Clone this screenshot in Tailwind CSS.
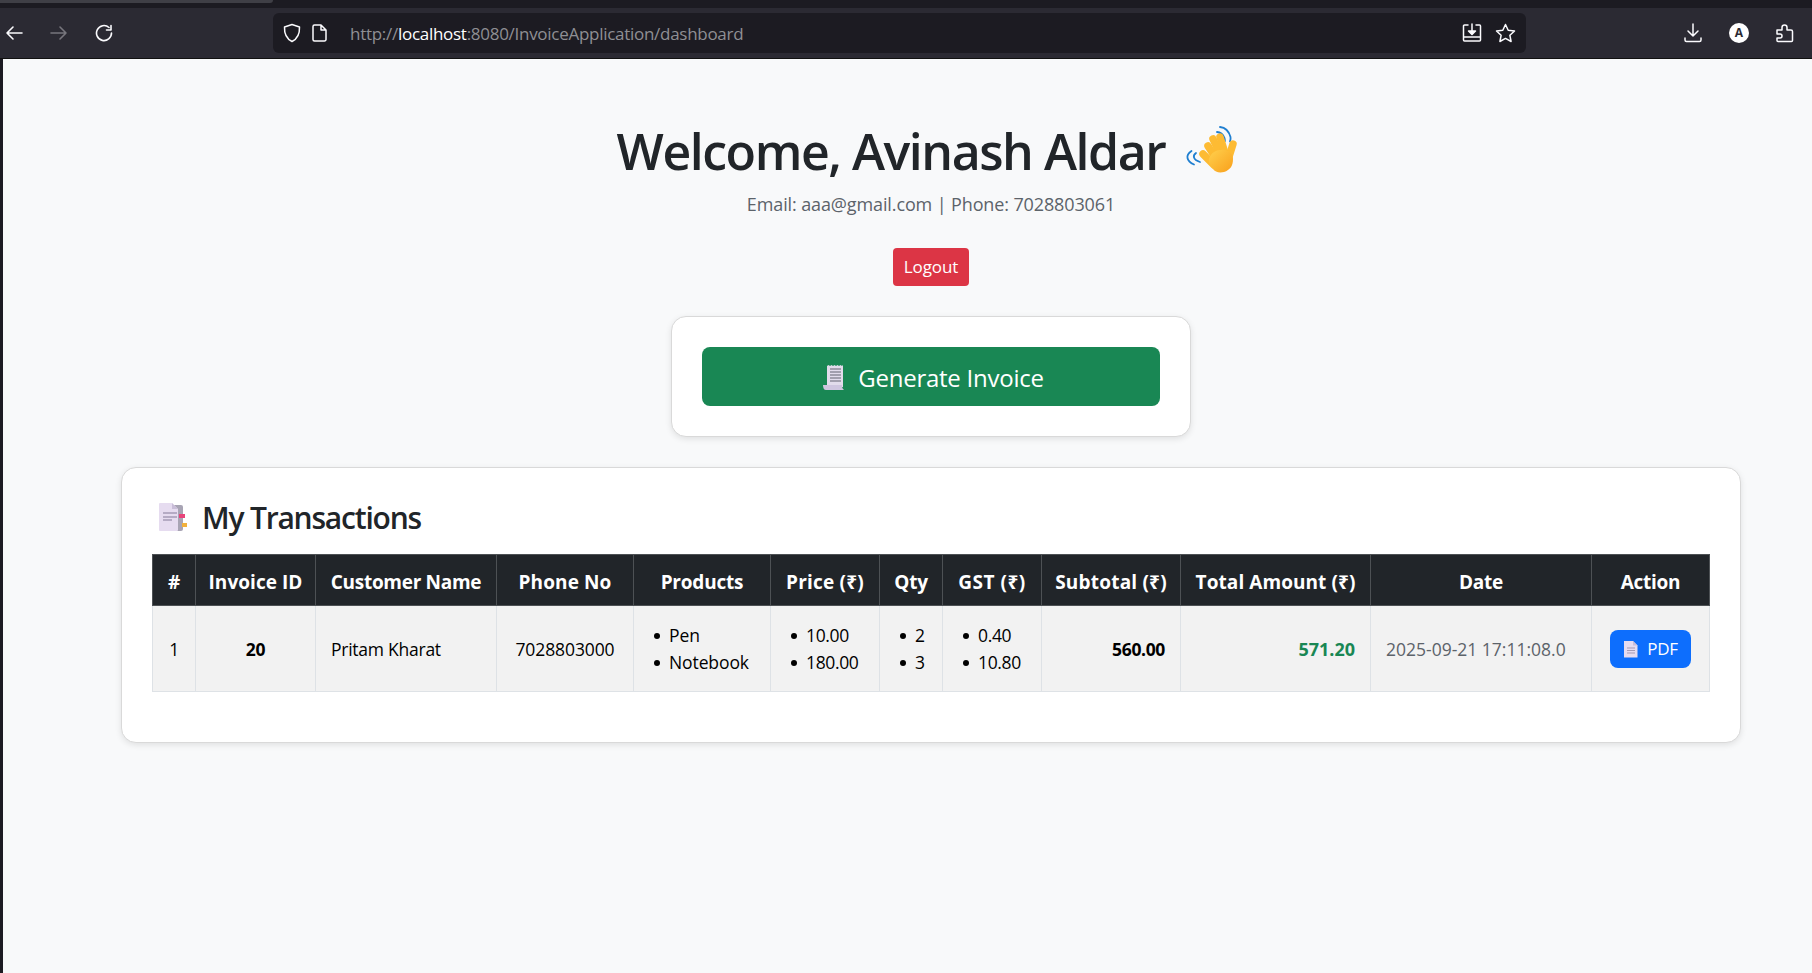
<!DOCTYPE html>
<html lang="en">

<head>
    <meta charset="UTF-8">
    <meta name="viewport" content="width=device-width, initial-scale=1.0">
    <title>Dashboard</title>
    <script src="https://cdn.jsdelivr.net/npm/@tailwindcss/browser@4"></script>
</head>

<body class="h-[973px] overflow-hidden bg-[#1c1b22] font-['Open_Sans','Noto_Sans',sans-serif]">
    <!-- browser chrome -->
    <div class="h-[8px] bg-[#1c1b22]">
        <div class="h-[3px] w-[273px] rounded-br bg-[#3f3f46]"></div>
    </div>
    <div class="flex h-[51px] items-start border-b border-[#111] bg-[#2b2a33] text-white">
        <div class="flex h-[50px] w-[273px] items-center">
            <svg class="ml-[5px]" width="18" height="18" viewBox="0 0 18 18" fill="none" stroke="#fbfbfe" stroke-width="1.6" stroke-linecap="round" stroke-linejoin="round"><path d="M17 9H2M8 3 2 9l6 6"/></svg>
            <svg class="ml-[27px]" width="18" height="18" viewBox="0 0 18 18" fill="none" stroke="#77767d" stroke-width="1.6" stroke-linecap="round" stroke-linejoin="round"><path d="M1 9h15M10 3l6 6-6 6"/></svg>
            <svg class="ml-[27px]" width="18" height="18" viewBox="0 0 18 18" fill="none" stroke="#fbfbfe" stroke-width="1.6" stroke-linecap="round" stroke-linejoin="round"><path d="M14 3.500A7.500 7.500 0 1 0 16.500 9M16 1.500V6h-4.500"/></svg>
        </div>
        <div class="mt-[5px] flex h-[40px] w-[1253px] items-center rounded-md bg-[#1c1b22]">
            <svg class="ml-[10px]" width="18" height="20" viewBox="0 0 18 20" fill="none" stroke="#fbfbfe" stroke-width="1.5" stroke-linejoin="round"><path d="M9 1.500 16.500 4c.3 6.500-1.500 11.500-7.500 14.500C3 15.500 1.200 10.500 1.500 4Z"/></svg>
            <svg class="ml-[11px]" width="15" height="18" viewBox="0 0 15 18" fill="none" stroke="#fbfbfe" stroke-width="1.5" stroke-linejoin="round"><path d="M2.500 1H9l5 5v9.500a1.500 1.500 0 0 1-1.500 1.500h-10A1.500 1.500 0 0 1 1 15.500v-13A1.500 1.500 0 0 1 2.500 1ZM9 1v5h5"/></svg>
            <div class="ml-[23px] mt-[2px] text-[17px] tracking-[-0.28px] text-[#8f8f94]">http://<span class="text-white">localhost</span>:8080/InvoiceApplication/dashboard</div>
            <svg class="ml-auto" width="20" height="20" viewBox="0 0 20 20" fill="none" stroke="#fbfbfe" stroke-width="1.500" stroke-linecap="round" stroke-linejoin="round"><path d="M6 2H2.500A1 1 0 0 0 1.500 3v14a1 1 0 0 0 1 1h15a1 1 0 0 0 1-1V3a1 1 0 0 0-1-1H14M1.500 14h17"/><path d="M10 1v8" /><path d="m6.500 8 3.500 3.500L13.500 8Z" fill="#fbfbfe"/></svg>
            <svg class="ml-[13px] mr-[10px]" width="21" height="20" viewBox="0 0 21 20" fill="none" stroke="#fbfbfe" stroke-width="1.500" stroke-linejoin="round"><path d="m10.500 1.500 2.700 5.700 6.300.8-4.600 4.300 1.200 6.200-5.600-3.100-5.600 3.100 1.200-6.200L1.500 8l6.300-.8Z"/></svg>
        </div>
        <div class="flex h-[50px] flex-1 items-center">
            <svg class="ml-[158px]" width="18" height="20" viewBox="0 0 18 20" fill="none" stroke="#fbfbfe" stroke-width="1.500" stroke-linecap="round" stroke-linejoin="round"><path d="M9 1v12M4 8l5 5 5-5M1 15v2a1.500 1.500 0 0 0 1.500 1.500h13A1.500 1.500 0 0 0 17 17v-2"/></svg>
            <div class="ml-[27px] flex h-[20px] w-[20px] items-center justify-center rounded-full bg-white text-[12px] font-bold text-[#2b2a33]">A</div>
            <svg class="ml-[27px]" width="18" height="20" viewBox="0 0 18 20" fill="none" stroke="#fbfbfe" stroke-width="1.500" stroke-linejoin="round"><path d="M1 7h5V4.500a2.500 2.500 0 0 1 5 0V7h4a1.500 1.500 0 0 1 1.500 1.500v9a1 1 0 0 1-1 1H2a1 1 0 0 1-1-1V15h3a2 2 0 0 0 0-4H1Z"/></svg>
        </div>
    </div>

    <!-- page -->
    <div class="ml-[3px] h-[914px] bg-[#f8f9fa] pt-[62px] text-[#212529]">
        <div class="ml-[118px] flex w-[1620px] flex-col items-center">
            <h1 class="flex h-[60px] items-center text-[50px] font-[550] tracking-[-1.45px]">
                Welcome, Avinash Aldar
                <svg class="ml-[20px]" width="60" height="55" viewBox="8 5 60 55">
                    <defs>
                        <linearGradient id="hand" x1="0" y1="0" x2="1" y2="1">
                            <stop offset="0" stop-color="#ffd04d" />
                            <stop offset="1" stop-color="#f9a01b" />
                        </linearGradient>
                    </defs>
                    <g fill="none" stroke="#1f7fd0" stroke-width="1.800" stroke-linecap="round">
                        <path d="M43 8c5 .5 9 4.500 10.500 10 .3 1.500 0 3-.5 4.500" />
                        <path d="M40 13c3 .2 6 2.500 7.500 6 .3 1 .5 2 .3 3.500" />
                        <path d="M14.500 32c-3 2-4.500 4.500-4 7 .5 2.500 3 5 6.500 6.500" />
                        <path d="M19 34c-2 1.500-2.500 3-2 4.500 .5 1.500 3 3.500 6 4.500" />
                    </g>
                    <g fill="none" stroke="#fdbb33" stroke-width="7.500" stroke-linecap="round">
                        <path d="M26 35 37 46" />
                        <path d="M31 27 40 41" />
                        <path d="M36 20 44 37" />
                        <path d="M43 18 48 34" />
                        <path d="M56 25 51 41" />
                    </g>
                    <path d="M32 40c2-7 9-10 16-9 5 1 8 4 8 9 0 7-3 11-9 13-5 1-9 0-11-3-2-3-5-7-4-10Z" fill="url(#hand)" />
                </svg>
            </h1>
            <p class="mt-[10px] text-[18px] leading-[26px] tracking-[-0.12px] text-[#5c636a]">Email: aaa@gmail.com | Phone: 7028803061</p>
            <button class="mt-[31px] h-[38px] w-[76px] rounded bg-[#dc3545] text-[17px] tracking-[-0.1px] text-white">Logout</button>
            <div class="mt-[30px] h-[121px] w-[520px] rounded-[15px] border border-[#d9d9d9] bg-white p-[30px] shadow-[0_2px_6px_rgba(0,0,0,0.1)]">
                <button class="flex h-[59px] w-full items-center justify-center rounded-lg bg-[#198754] pt-[2px] text-[24px] tracking-[-0.25px] text-white">
                    <svg class="ml-[5px] mr-[13px]" width="22" height="25" viewBox="0 0 22 25">
                        <path d="M4 1l1.500-1 1.500 1 1.500-1 1.500 1 1.500-1 1.500 1 1.500-1 1.500 1 1.500-1 1.500 1 1-1V22H4Z" fill="#e2dcec" />
                        <path d="M0 20h19c0 2 .5 4 2 5H3c-2 0-3-2-3-5Z" fill="#cfc6e0" />
                        <path d="M7 4h11M7 7h11M7 10h11M7 13h11M7 16h11" stroke="#8d8a99" stroke-width="1.300" />
                    </svg>
                    Generate Invoice
                </button>
            </div>
        </div>

        <div class="ml-[118px] mt-[30px] h-[276px] w-[1620px] rounded-[15px] border border-[#d9d9d9] bg-white pl-[30px] pt-[31px] shadow-[0_2px_6px_rgba(0,0,0,0.1)]">
            <h3 class="flex h-[36px] items-center text-[30px] font-[550] tracking-[-1.2px]">
                <svg class="ml-[7px] mr-[15px]" width="28" height="28" viewBox="9 8 28 28">
                    <path d="M24 10h7a2 2 0 0 1 2 2v22a2 2 0 0 1-2 2h-7Z" fill="#a8a4b4" />
                    <path d="M10 8h12l6 6v21a1 1 0 0 1-1 1H10a1 1 0 0 1-1-1V9a1 1 0 0 1 1-1Z" fill="#e6dcf0" />
                    <path d="M22 8v6h6Z" fill="#c9bdd8" />
                    <path d="M13 18h14M13 22h14M13 25h9" stroke="#a59bb5" stroke-width="1.500" />
                    <rect x="29" y="19" width="6" height="4" fill="#e8447a" />
                    <rect x="32" y="28" width="5" height="4" fill="#f2b13c" />
                </svg>
                My Transactions
            </h3>
            <table class="mt-[19px] w-[1557px] table-fixed border-collapse text-[17.5px] tracking-[-0.35px] text-black">
                <colgroup>
                    <col class="w-[43px]">
                    <col class="w-[120px]">
                    <col class="w-[181px]">
                    <col class="w-[137px]">
                    <col class="w-[137px]">
                    <col class="w-[109px]">
                    <col class="w-[63px]">
                    <col class="w-[99px]">
                    <col class="w-[139px]">
                    <col class="w-[190px]">
                    <col class="w-[221px]">
                    <col class="w-[118px]">
                </colgroup>
                <thead>
                    <tr class="h-[51px] bg-[#212529] text-[19px] tracking-[-0.3px] text-white">
                        <th class="border border-[#4d5154] pt-[4px] font-bold">#</th>
                        <th class="border border-[#4d5154] pt-[4px] font-bold tracking-[0.05px]">Invoice ID</th>
                        <th class="border border-[#4d5154] pt-[4px] font-bold">Customer Name</th>
                        <th class="border border-[#4d5154] pt-[4px] font-bold tracking-[0.1px]">Phone No</th>
                        <th class="border border-[#4d5154] pt-[4px] font-bold tracking-[-0.2px]">Products</th>
                        <th class="border border-[#4d5154] pt-[4px] font-bold tracking-[0.2px]">Price (₹)</th>
                        <th class="border border-[#4d5154] pt-[4px] font-bold">Qty</th>
                        <th class="border border-[#4d5154] pt-[4px] font-bold tracking-[0.5px]">GST (₹)</th>
                        <th class="border border-[#4d5154] pt-[4px] font-bold tracking-[0.2px]">Subtotal (₹)</th>
                        <th class="border border-[#4d5154] pt-[4px] font-bold tracking-[0.07px]">Total Amount (₹)</th>
                        <th class="border border-[#4d5154] pt-[4px] font-bold">Date</th>
                        <th class="border border-[#4d5154] pt-[4px] font-bold">Action</th>
                    </tr>
                </thead>
                <tbody>
                    <tr class="h-[86px] bg-[#f2f2f2]">
                        <td class="border border-[#dee2e6] pt-[2px] text-center">1</td>
                        <td class="border border-[#dee2e6] pt-[2px] text-center font-bold">20</td>
                        <td class="border border-[#dee2e6] pl-[15px] pt-[2px] tracking-[-0.25px]">Pritam Kharat</td>
                        <td class="border border-[#dee2e6] pt-[2px] text-center tracking-[-0.1px]">7028803000</td>
                        <td class="border border-[#dee2e6]">
                            <ul class="pl-[35px] leading-[27px] tracking-[-0.1px]">
                                <li class="relative before:absolute before:left-[-15px] before:top-[11px] before:h-[6px] before:w-[6px] before:rounded-full before:bg-black">Pen</li>
                                <li class="relative before:absolute before:left-[-15px] before:top-[11px] before:h-[6px] before:w-[6px] before:rounded-full before:bg-black">Notebook</li>
                            </ul>
                        </td>
                        <td class="border border-[#dee2e6]">
                            <ul class="pl-[35px] leading-[27px]">
                                <li class="relative before:absolute before:left-[-15px] before:top-[11px] before:h-[6px] before:w-[6px] before:rounded-full before:bg-black">10.00</li>
                                <li class="relative before:absolute before:left-[-15px] before:top-[11px] before:h-[6px] before:w-[6px] before:rounded-full before:bg-black">180.00</li>
                            </ul>
                        </td>
                        <td class="border border-[#dee2e6]">
                            <ul class="pl-[35px] leading-[27px]">
                                <li class="relative before:absolute before:left-[-15px] before:top-[11px] before:h-[6px] before:w-[6px] before:rounded-full before:bg-black">2</li>
                                <li class="relative before:absolute before:left-[-15px] before:top-[11px] before:h-[6px] before:w-[6px] before:rounded-full before:bg-black">3</li>
                            </ul>
                        </td>
                        <td class="border border-[#dee2e6]">
                            <ul class="pl-[35px] leading-[27px]">
                                <li class="relative before:absolute before:left-[-15px] before:top-[11px] before:h-[6px] before:w-[6px] before:rounded-full before:bg-black">0.40</li>
                                <li class="relative before:absolute before:left-[-15px] before:top-[11px] before:h-[6px] before:w-[6px] before:rounded-full before:bg-black">10.80</li>
                            </ul>
                        </td>
                        <td class="border border-[#dee2e6] pr-[15px] pt-[2px] text-right font-bold">560.00</td>
                        <td class="border border-[#dee2e6] pr-[15px] pt-[2px] text-right text-[18px] font-bold tracking-[0px] text-[#198754]">571.20</td>
                        <td class="border border-[#dee2e6] pl-[15px] pt-[2px] tracking-[0px] text-[#5c636a]">2025-09-21 17:11:08.0</td>
                        <td class="border border-[#dee2e6] text-center">
                            <button class="inline-flex h-[38px] w-[81px] items-center justify-center rounded-lg bg-[#0d6efd] text-[17px] text-white">
                                <svg class="mr-[9px]" width="15" height="18" viewBox="0 0 15 18">
                                    <path d="M1 1h9l4.500 4.500V17.500H1Z" fill="#e6dcf0" />
                                    <path d="M10 1v4.500h4.500Z" fill="#c9bdd8" />
                                    <path d="M4 8h8M4 10.500h8M4 13h8" stroke="#a59bb5" stroke-width="1" />
                                </svg>
                                PDF
                            </button>
                        </td>
                    </tr>
                </tbody>
            </table>
        </div>
    </div>
</body>

</html>
